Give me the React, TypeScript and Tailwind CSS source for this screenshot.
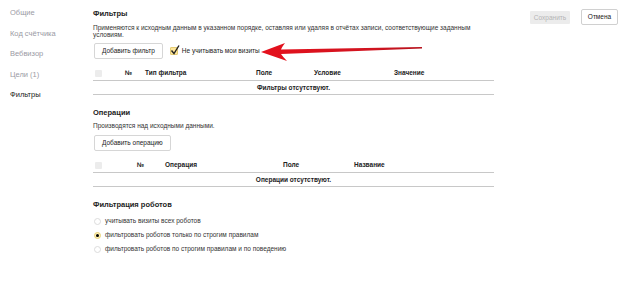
import React from "react";

const menu = ["Общие", "Код счётчика", "Вебвизор", "Цели (1)", "Фильтры"];

const filterCols = [
  { label: "№", w: "w-[20px]" },
  { label: "Тип фильтра", w: "w-[111px]" },
  { label: "Поле", w: "w-[58px]" },
  { label: "Условие", w: "w-[80px]" },
  { label: "Значение", w: "flex-1" },
];

const opCols = [
  { label: "№", w: "w-[28px]" },
  { label: "Операция", w: "w-[118px]" },
  { label: "Поле", w: "w-[71px]" },
  { label: "Название", w: "flex-1" },
];

function Box() {
  return <span className="block w-[7px] h-[7px] bg-[#ececec] rounded-[1px]" />;
}

function Table({ first, cols, empty }: { first: string; cols: { label: string; w: string }[]; empty: string }) {
  return (
    <div className="w-[401px]">
      <div className="flex items-center h-[14px] font-bold text-[#222]">
        <div className={`${first} pl-[2px]`}>
          <Box />
        </div>
        {cols.map((c) => (
          <div key={c.label} className={c.w}>
            {c.label}
          </div>
        ))}
      </div>
      <div className="border-t border-[#c8c8c8] h-[14px] flex items-center justify-center font-bold text-[#222]">
        {empty}
      </div>
      <div className="border-t border-[#c8c8c8]" />
    </div>
  );
}

function Radio({ on, label }: { on?: boolean; label: string }) {
  return (
    <div className="flex items-center gap-[4px] h-[14px]">
      <span
        className={`w-[7px] h-[7px] rounded-full flex items-center justify-center ${
          on ? "bg-[#fff1b8] border border-[#e8d27a]" : "border border-[#dcdcdc]"
        }`}
      >
        {on && <span className="w-[3px] h-[3px] rounded-full bg-black" />}
      </span>
      <span className="text-[#333]">{label}</span>
    </div>
  );
}

export default function App() {
  return (
    <div
      className="relative w-[628px] h-[306px] bg-white flex text-[6.5px] leading-[8px] text-[#222]"
      style={{ fontFamily: '"Liberation Sans", Arial, sans-serif' }}
    >
      <div className="w-[93px] pl-[10px] pt-[9px] flex flex-col">
        {menu.map((m, i) => (
          <div key={m} className={`h-[20.5px] text-[7.5px] ${i === 4 ? "text-[#222]" : "text-[#9a9aa4]"}`}>
            {m}
          </div>
        ))}
      </div>

      <div className="w-[401px] flex flex-col pt-[10px]">
        <div className="font-bold text-[7.5px] leading-[8px]">Фильтры</div>
        <p className="mt-[6px] w-[392px] leading-[7px] text-[#333]">
          Применяются к исходным данным в указанном порядке, оставляя или удаляя в отчётах записи, соответствующие заданным условиям.
        </p>
        <div className="mt-[5px] flex items-center gap-[7px]">
          <button className="h-[16px] px-[7px] ml-[1px] border border-[#d6d6d6] rounded-[2px] bg-white text-[#222]">
            Добавить фильтр
          </button>
          <span className="w-[8px] h-[8px] bg-[#ffe69a] border border-[#e3cc75] rounded-[1px] relative">
            <svg viewBox="0 0 10 10" className="absolute -left-[1px] -top-[3px] w-[10px] h-[10px]">
              <path d="M1.5 5.5 L4 8.5 L9 0.5" fill="none" stroke="#222" strokeWidth="1.4" />
            </svg>
          </span>
          <span className="-ml-[3px]">Не учитывать мои визиты</span>
        </div>

        <div className="mt-[7px]">
          <Table first="w-[32px]" cols={filterCols} empty="Фильтры отсутствуют." />
        </div>

        <div className="mt-[14px] font-bold text-[7.5px] leading-[8px]">Операции</div>
        <p className="mt-[5px] text-[#333]">Производятся над исходными данными.</p>
        <button className="mt-[5px] self-start h-[16px] px-[7px] ml-[1px] border border-[#d6d6d6] rounded-[2px] bg-white text-[#222]">
          Добавить операцию
        </button>
        <div className="mt-[7px]">
          <Table first="w-[44px]" cols={opCols} empty="Операции отсутствуют." />
        </div>

        <div className="mt-[14px] font-bold text-[7.5px] leading-[8px]">Фильтрация роботов</div>
        <div className="mt-[5px] flex flex-col pl-[1px]">
          <Radio label="учитывать визиты всех роботов" />
          <Radio on label="фильтровать роботов только по строгим правилам" />
          <Radio label="фильтровать роботов по строгим правилам и по поведению" />
        </div>
      </div>

      <div className="flex-1 flex justify-end items-start gap-[11px] pt-[9px] pr-[10px]">
        <button className="mt-[2px] h-[13px] w-[40px] bg-[#ececec] text-[#b4b4b4] rounded-[1px]">Сохранить</button>
        <button className="h-[16px] w-[37px] border border-[#d0d0d0] rounded-[2px] bg-white text-[#222]">Отмена</button>
      </div>

      <svg className="absolute left-[258px] top-[40px]" width="168" height="24" viewBox="0 0 168 24">
        <defs>
          <linearGradient id="ar" x1="0" x2="1" y1="0" y2="0">
            <stop offset="0" stopColor="#e5101c" />
            <stop offset="0.7" stopColor="#d01420" />
            <stop offset="1" stopColor="#b5121c" />
          </linearGradient>
        </defs>
        <path
          d="M3 12 L27 3 Q24 7 23 9.5 L164 7 L164 8.6 L23 14 Q25 17 29 21 Z"
          fill="url(#ar)"
        />
      </svg>
    </div>
  );
}
